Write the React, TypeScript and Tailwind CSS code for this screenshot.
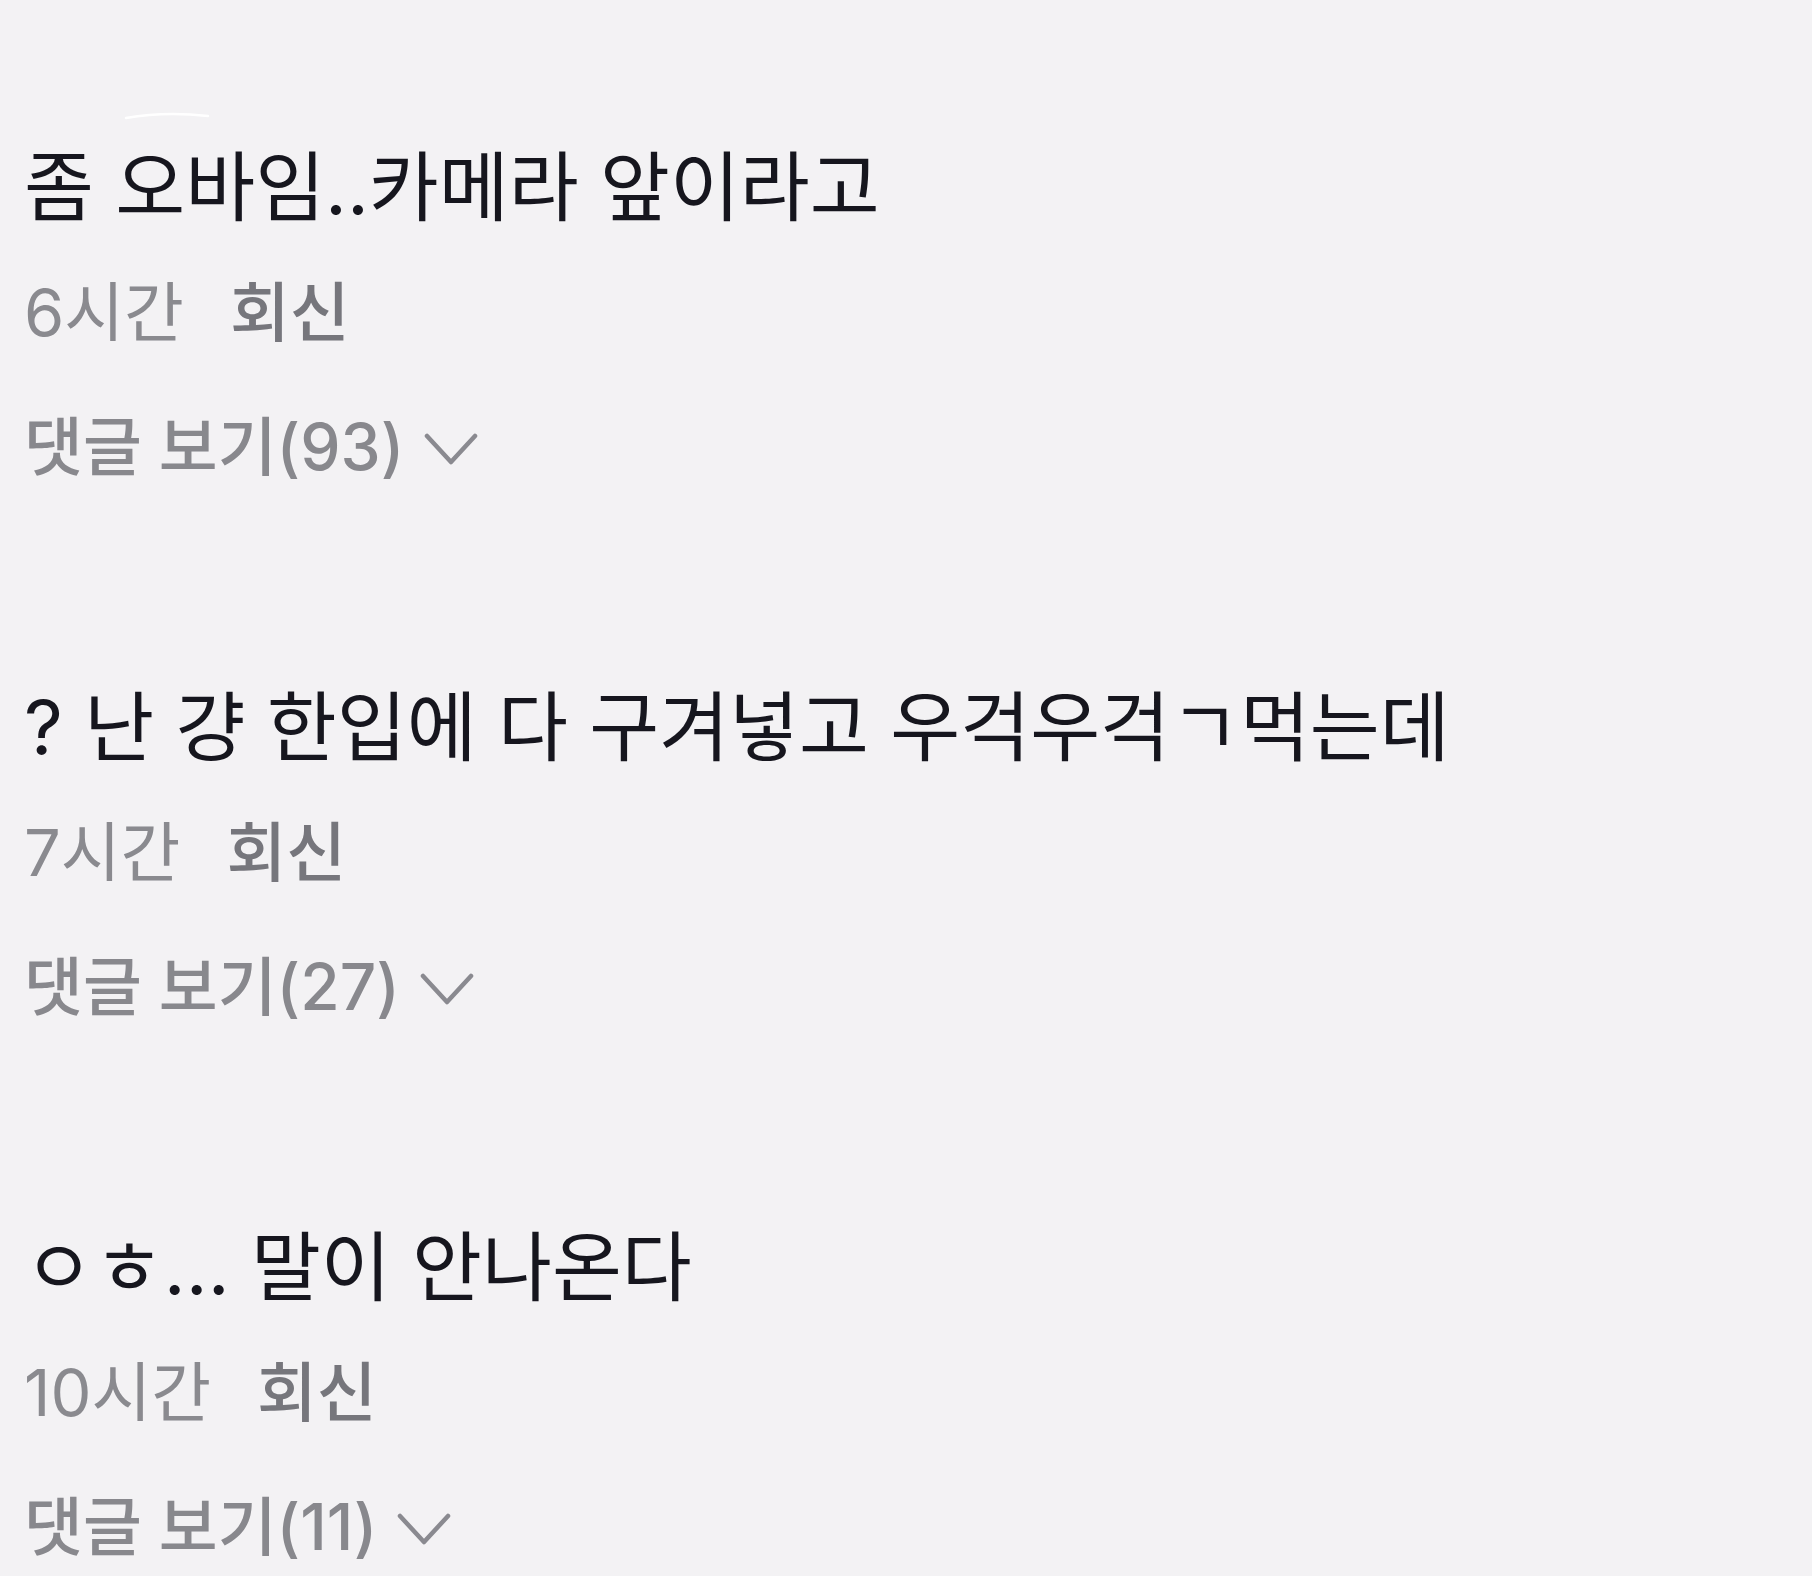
import React from 'react';

type Comment = {
  text: string;
  time: string;
  replies: number;
};

const comments: Comment[] = [
  { text: '좀 오바임..카메라 앞이라고', time: '6시간', replies: 93 },
  { text: '? 난 걍 한입에 다 구겨넣고 우걱우걱ㄱ먹는데', time: '7시간', replies: 27 },
  { text: 'ㅇㅎ... 말이 안나온다', time: '10시간', replies: 11 },
];

function Chevron() {
  return (
    <svg width="54" height="34" viewBox="0 0 54 34" fill="none" className="ml-5 mt-1">
      <path d="M3 4 L27 30 L51 4" stroke="#8a8a90" strokeWidth="4.5" strokeLinecap="round" strokeLinejoin="round" />
    </svg>
  );
}

function CommentItem({ c }: { c: Comment }) {
  return (
    <div className="flex flex-col">
      <div className="h-[100px] flex items-center text-[76px] leading-none text-[#16161e] whitespace-nowrap">
        {c.text}
      </div>
      <div className="h-[150px] flex items-center text-[65px] leading-none whitespace-nowrap">
        <span className="text-[#8a8a8f]">{c.time}</span>
        <span className="ml-[46px] font-medium text-[#76767c]">회신</span>
      </div>
      <div className="h-[120px] flex items-center text-[64px] leading-none font-medium text-[#88888d] whitespace-nowrap">
        <span>댓글 보기({c.replies})</span>
        <Chevron />
      </div>
    </div>
  );
}

export default function App() {
  return (
    <div
      className="relative w-[1812px] h-[1576px] overflow-hidden bg-[#f3f2f4] pl-[24px] pt-[137px] flex flex-col gap-[170px]"
      style={{ fontFamily: '"Inter", "Noto Sans CJK KR", sans-serif' }}
    >
      <svg className="absolute left-[120px] top-[108px]" width="100" height="16" viewBox="0 0 100 16" fill="none">
        <path d="M6 10 Q45 3 88 8" stroke="#ffffff" strokeWidth="2.5" strokeLinecap="round" />
      </svg>
      {comments.map((c) => (
        <CommentItem key={c.time} c={c} />
      ))}
    </div>
  );
}
